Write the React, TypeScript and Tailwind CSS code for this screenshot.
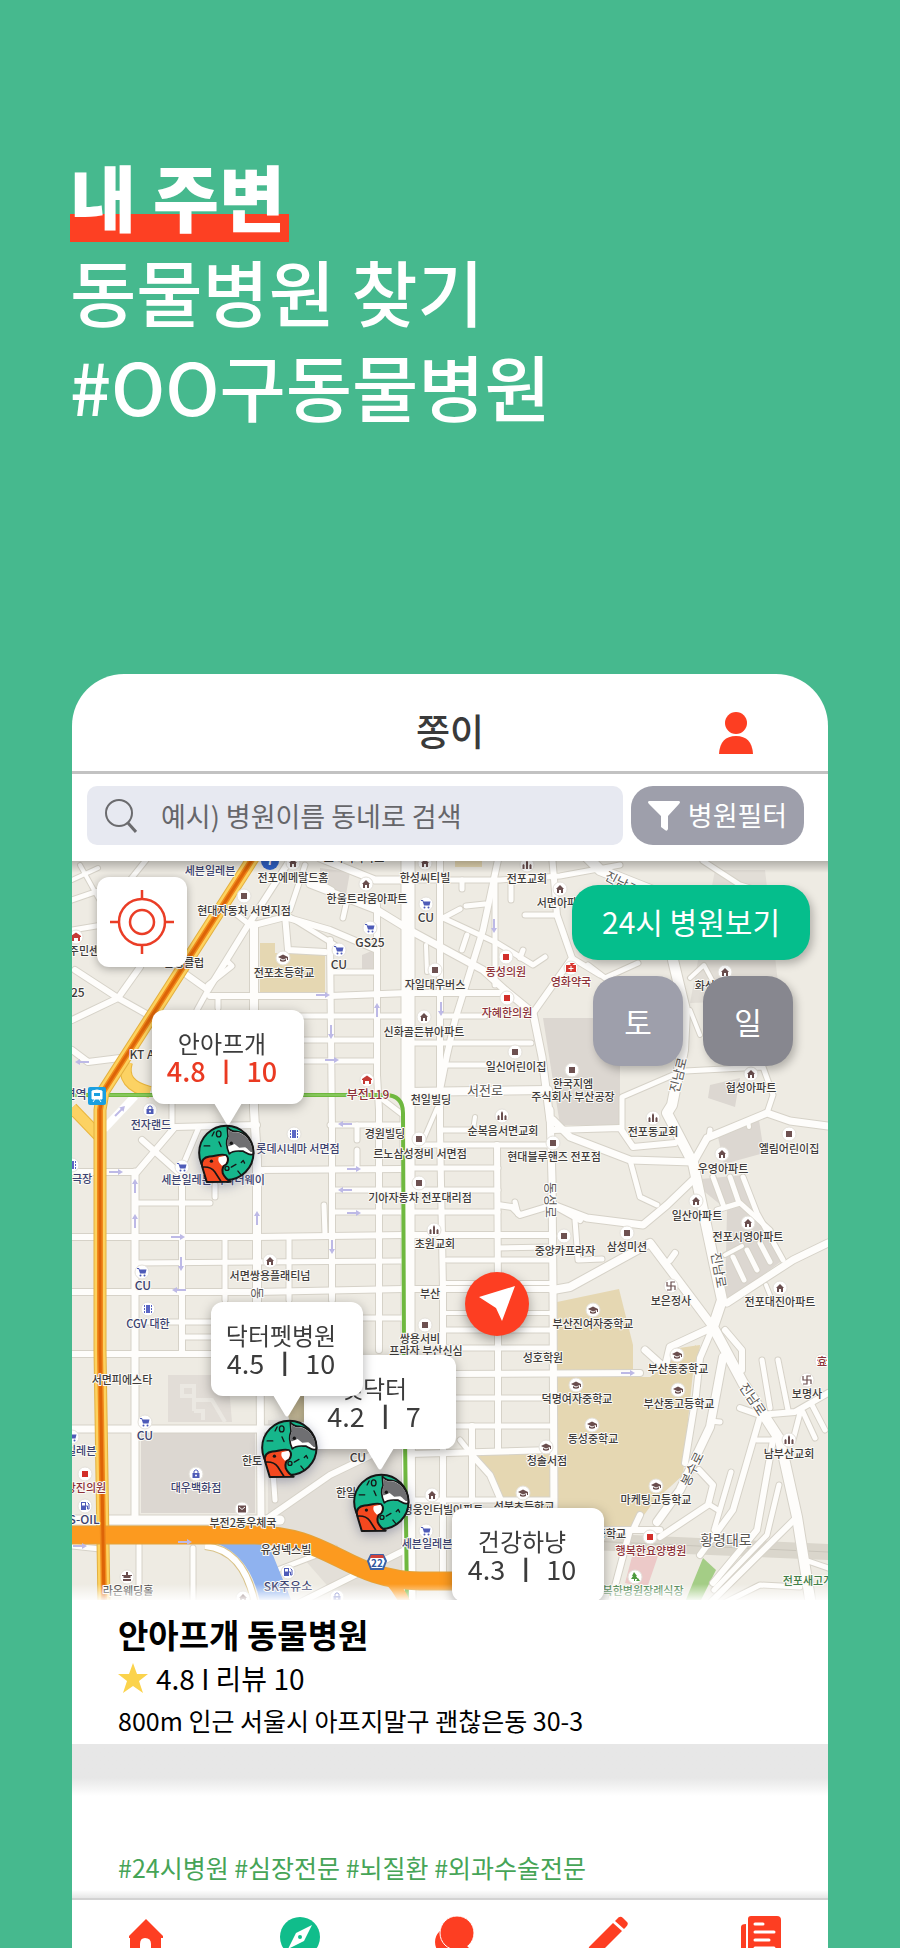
import React from "react";

type Kind =
  | "home" | "cart" | "square" | "red" | "church" | "school" | "bag" | "cinema"
  | "fuel" | "mail" | "temple" | "fire" | "cross" | "tree" | "hall";

type Tone = "dark" | "navy" | "wine" | "green";

const TONES: Record<Tone, string> = {
  dark: "#3f3c3b",
  navy: "#3c4270",
  wine: "#8c3038",
  green: "#3f7d45",
};

/* [text, centre x, centre y, tone, size] */
type Label = [string, number, number, Tone?, number?];

const LABELS: Label[] = [
  ["세븐일레븐", 210, 871, "navy"],
  ["전포에메랄드홈", 293, 878],
  ["스카이아파트", 354, 858],
  ["현대자동차 서면지점", 244, 911],
  ["전포초등학교", 284, 973],
  ["동주민센터", 84, 951],
  ["볼링클럽", 184, 963],
  ["GS25", 70, 993, "dark", 12],
  ["KT A", 142, 1055, "dark", 12],
  ["서면역", 70, 1095, "navy", 12],
  ["한울트라움아파트", 367, 899],
  ["한성씨티빌", 425, 878],
  ["전포교회", 527, 879],
  ["서면아파트", 562, 903],
  ["CU", 426, 918, "dark", 12],
  ["GS25", 370, 943, "dark", 12],
  ["CU", 339, 965, "dark", 12],
  ["자일대우버스", 435, 985],
  ["동성의원", 506, 972, "wine"],
  ["자혜한의원", 507, 1013, "wine"],
  ["영화약국", 571, 982, "wine"],
  ["신화골든뷰아파트", 424, 1032],
  ["일신어린이집", 516, 1067],
  ["부전119", 368, 1095, "wine", 12],
  ["천일빌딩", 431, 1100],
  ["한국지엠", 573, 1084],
  ["주식회사 부산공장", 573, 1097],
  ["화신아파트", 720, 986],
  ["협성아파트", 751, 1088],
  ["전자랜드", 151, 1125, "navy"],
  ["롯데시네마 서면점", 298, 1149, "navy"],
  ["극장", 82, 1179, "navy"],
  ["세븐일레븐 바이더웨이", 213, 1180, "navy"],
  ["서면쌍용플래티넘", 270, 1276],
  ["CU", 143, 1286, "navy", 12],
  ["CGV 대한", 148, 1324, "navy"],
  ["경원빌딩", 385, 1134],
  ["르노삼성정비 서면점", 420, 1154],
  ["순복음서면교회", 503, 1131],
  ["현대블루핸즈 전포점", 554, 1157],
  ["기아자동차 전포대리점", 420, 1198],
  ["초원교회", 435, 1244],
  ["중앙카프라자", 565, 1251],
  ["부산", 430, 1294],
  ["쌍용서비", 420, 1339],
  ["프라자 부산신심", 426, 1351],
  ["성호학원", 543, 1358],
  ["부산진여자중학교", 593, 1324],
  ["전포동교회", 653, 1132],
  ["엘림어린이집", 789, 1149],
  ["우영아파트", 723, 1169],
  ["일산아파트", 697, 1216],
  ["전포시영아파트", 748, 1237],
  ["삼성미션", 627, 1247],
  ["보은정사", 671, 1301],
  ["전포대진아파트", 780, 1302],
  ["서면피에스타", 122, 1380],
  ["CU", 145, 1436, "navy", 12],
  ["세븐일레븐", 71, 1451, "navy"],
  ["강진의원", 86, 1488, "wine"],
  ["S-OIL", 84, 1520, "navy", 12],
  ["대우백화점", 196, 1488, "navy"],
  ["부전2동우체국", 243, 1523],
  ["한토", 252, 1461],
  ["유성넥스빌", 286, 1550],
  ["SK주유소", 288, 1587, "navy", 12],
  ["라온웨딩홀", 128, 1591],
  ["CU", 358, 1458, "dark", 12],
  ["한일", 346, 1493],
  ["정웅인터빌아파트", 443, 1510],
  ["세븐일레븐", 427, 1544, "navy"],
  ["성북초등학교", 524, 1507],
  ["청솔서점", 547, 1461],
  ["덕명여자중학교", 577, 1399],
  ["동성중학교", 593, 1439],
  ["부산동중학교", 678, 1369],
  ["부산동고등학교", 679, 1404],
  ["마케팅고등학교", 656, 1500],
  ["보명사", 807, 1394],
  ["효", 822, 1362, "wine"],
  ["남부산교회", 789, 1454],
  ["행복한요양병원", 651, 1551, "wine"],
  ["중학교", 611, 1534],
  ["행복한병원장례식장", 638, 1591, "green"],
  ["전포새고개", 808, 1581, "green"],
];

/* [text, x, y, rotation, size] */
const ROAD_NAMES: [string, number, number, number, number][] = [
  ["서전로", 485, 1090, 0, 13],
  ["진남로", 622, 883, 28, 13],
  ["진남로", 678, 1075, -76, 13],
  ["동성로", 551, 1200, 90, 13],
  ["진남로", 719, 1270, 80, 13],
  ["진남로", 753, 1399, 56, 13],
  ["봉수로", 692, 1469, -64, 13],
  ["황령대로", 726, 1540, 0, 14],
  ["동", 258, 1293, 90, 13],
];

const POIS: [Kind, number, number][] = [
  ["home", 293, 863], ["square", 244, 896], ["school", 283, 958], ["fire", 76, 937],
  ["home", 366, 884], ["home", 425, 863], ["church", 527, 865], ["home", 560, 889],
  ["cart", 426, 904], ["cart", 370, 928], ["cart", 339, 950], ["square", 435, 970],
  ["red", 506, 957], ["red", 507, 998], ["cross", 571, 968], ["home", 424, 1017],
  ["square", 515, 1052], ["fire", 367, 1080], ["square", 572, 1070], ["home", 725, 972],
  ["home", 751, 1074], ["bag", 150, 1110], ["cinema", 294, 1134], ["cinema", 72, 1165],
  ["cart", 182, 1167], ["home", 270, 1261], ["cart", 142, 1272], ["cinema", 148, 1309],
  ["square", 419, 1139], ["church", 502, 1116], ["square", 553, 1143], ["square", 419, 1183],
  ["church", 434, 1230], ["square", 564, 1236], ["square", 425, 1325], ["school", 593, 1310],
  ["church", 653, 1118], ["square", 789, 1134], ["home", 722, 1154], ["home", 696, 1201],
  ["home", 748, 1223], ["square", 627, 1233], ["temple", 671, 1286], ["home", 780, 1288],
  ["cart", 145, 1422], ["cart", 72, 1437], ["red", 85, 1474], ["fuel", 85, 1506],
  ["bag", 196, 1474], ["mail", 242, 1509], ["fuel", 288, 1572], ["hall", 127, 1577],
  ["home", 432, 1495], ["cart", 426, 1531], ["school", 523, 1493], ["school", 546, 1447],
  ["school", 576, 1385], ["school", 592, 1425], ["school", 677, 1355], ["school", 678, 1390],
  ["school", 656, 1486], ["temple", 807, 1380], ["fire", 822, 1361], ["church", 789, 1440],
  ["red", 650, 1537], ["tree", 635, 1577], ["home", 243, 1598], ["bag", 337, 1597],
];

/* [points, width] */
const ROADS: [string, number][] = [
  ["254,925 254,1110 257,1160 257,1350", 8],
  ["408,855 408,1350 409,1605", 13],
  ["330,940 332,1130 332,1300", 6],
  ["377,905 377,1075 379,1110 379,1350", 6],
  ["440,855 440,1130 443,1290 443,1580", 6],
  ["495,880 495,985", 5],
  ["497,1145 498,1290 498,1450", 6],
  ["550,1110 552,1180 553,1290 554,1515", 7],
  ["499,855 483,930 455,1020 447,1055 440,1090", 6],
  ["320,858 375,880 408,880", 7],
  ["310,884 377,910 413,932 483,970 505,990 533,1013 542,1057 550,1120", 7],
  ["408,880 500,880 560,876 620,865", 5],
  ["443,918 497,943 533,965 545,957", 5],
  ["443,918 460,909", 5],
  ["466,906 485,904", 5],
  ["462,880 462,889", 5],
  ["511,880 511,900", 5],
  ["462,950 467,935", 5],
  ["520,958 523,950", 5],
  ["426,945 427,972", 4],
  ["533,1013 572,958 557,915 552,855", 6],
  ["525,915 556,915", 5],
  ["572,958 600,975", 5],
  ["210,996 330,996 408,993 507,993", 6],
  ["332,972 377,972", 5],
  ["254,1016 408,1016", 5],
  ["443,1016 485,1016", 5],
  ["254,1040 377,1040", 5],
  ["413,1043 531,1043", 5],
  ["254,1061 377,1061", 5],
  ["440,1065 543,1065", 5],
  ["408,1092 548,1090", 8],
  ["377,1095 403,1115 403,1150", 5],
  ["72,900 130,880 150,855", 5],
  ["72,930 120,922", 5],
  ["80,865 105,910", 4],
  ["72,880 98,868", 4],
  ["180,970 208,990 245,930 290,860", 6],
  ["72,1020 118,998 140,967", 6],
  ["75,970 118,998 150,1016", 6],
  ["208,990 197,1010", 5],
  ["208,985 232,966 228,962", 5],
  ["218,996 218,1008", 5],
  ["250,925 225,905", 5],
  ["254,925 285,917 330,930 377,950", 6],
  ["285,915 288,950 325,952", 6],
  ["290,910 305,865", 5],
  ["285,914 335,945", 5],
  ["305,875 332,890", 5],
  ["343,918 347,900", 5],
  ["72,1050 88,1062 120,1058", 6],
  ["72,1237 257,1237 403,1235 552,1235", 6],
  ["137,1263 403,1261", 5],
  ["447,1260 552,1260", 5],
  ["72,1292 257,1292 403,1289 552,1289", 6],
  ["137,1322 225,1322", 5],
  ["183,1337 225,1337", 5],
  ["72,1354 257,1354", 6],
  ["72,1172 135,1172", 6],
  ["135,1172 135,1515", 7],
  ["182,1175 182,1354", 6],
  ["225,1237 225,1300", 5],
  ["289,1237 289,1300", 5],
  ["325,1235 324,1205", 5],
  ["142,1140 178,1172", 6],
  ["137,1172 175,1127 257,1125", 6],
  ["199,1127 180,1172", 5],
  ["137,1203 210,1203", 5],
  ["215,1185 215,1197", 5],
  ["257,1170 403,1169", 6],
  ["172,1100 172,1125", 5],
  ["330,1125 403,1125", 5],
  ["357,1125 357,1140", 5],
  ["357,1150 357,1169", 5],
  ["332,1190 403,1190", 5],
  ["332,1212 403,1212", 5],
  ["332,1318 403,1318", 5],
  ["413,1145 552,1145", 5],
  ["440,1130 480,1130", 5],
  ["473,1130 475,1117", 4],
  ["422,1143 437,1108", 4],
  ["413,1168 498,1168", 5],
  ["413,1190 498,1190", 5],
  ["413,1212 498,1212", 5],
  ["498,1205 512,1207 520,1215 553,1205 580,1220", 6],
  ["518,1214 515,1202", 5],
  ["498,1248 550,1247", 5],
  ["443,1283 552,1283", 4],
  ["443,1313 552,1313", 4],
  ["443,1330 552,1330", 5],
  ["443,1348 552,1348", 5],
  ["443,1374 640,1373", 6],
  ["443,1398 552,1398", 5],
  ["443,1426 552,1426", 5],
  ["409,1454 552,1450", 6],
  ["472,1426 472,1500", 6],
  ["472,1455 490,1475 505,1510", 6],
  ["460,1440 468,1450", 5],
  ["409,1500 552,1500", 5],
  ["72,1429 332,1429", 7],
  ["72,1520 280,1520", 9],
  ["260,1354 261,1520", 7],
  ["268,1518 330,1475 409,1437", 6],
  ["270,1429 275,1500", 5],
  ["139,1545 139,1600", 5],
  ["193,1548 193,1600", 5],
  ["280,1569 335,1548", 5],
  ["295,1605 409,1548", 6],
  ["72,1546 100,1549", 5],
  ["585,855 600,870 663,895 673,960 685,1010 683,1050 672,1105 667,1113 693,1163 722,1300 713,1327 743,1383 780,1440 797,1517 811,1605", 10],
  ["703,861 740,885 790,900", 5],
  ["553,1120 570,1137 630,1160 693,1162", 7],
  ["630,1160 640,1197 657,1205", 5],
  ["553,1205 587,1218 643,1225 667,1205 693,1180", 7],
  ["575,1220 578,1260 602,1259", 5],
  ["693,1163 707,1138 767,1113 790,1121 828,1126", 7],
  ["709,1138 710,1130", 5],
  ["748,1120 749,1127", 4],
  ["767,1113 773,1095 763,1067 685,1071", 5],
  ["622,1128 622,1097 680,1072", 5],
  ["553,1130 620,1128 633,1147 675,1143", 6],
  ["673,1010 690,1010 700,1035", 4],
  ["588,965 605,978 638,963", 5],
  ["690,978 704,965 720,995", 4],
  ["553,1290 570,1287 650,1243 713,1327", 8],
  ["670,1260 675,1253", 6],
  ["645,1350 665,1368 670,1347 713,1327", 7],
  ["713,1327 700,1358 696,1395 685,1463", 6],
  ["727,1303 793,1260 828,1243", 7],
  ["743,1177 757,1213 783,1260", 5],
  ["717,1210 740,1203 770,1230", 5],
  ["713,1177 724,1207", 5],
  ["730,1177 739,1203", 5],
  ["733,1257 744,1280", 5],
  ["747,1250 757,1270", 5],
  ["760,1243 770,1262", 5],
  ["725,1255 742,1246", 4],
  ["766,1285 770,1295", 4],
  ["725,1330 742,1350 742,1370", 6],
  ["723,1357 710,1427 680,1490 657,1522", 8],
  ["710,1421 720,1422", 5],
  ["699,1470 713,1485 708,1505 660,1537", 6],
  ["760,1417 733,1510 700,1555", 6],
  ["757,1440 780,1440", 5],
  ["773,1440 757,1530 713,1583", 6],
  ["779,1485 767,1535 714,1590", 5],
  ["797,1517 708,1605", 6],
  ["740,1408 760,1415 795,1412 828,1393", 6],
  ["762,1360 770,1408", 5],
  ["778,1360 788,1410", 5],
  ["803,1412 815,1438", 5],
  ["812,1405 825,1430", 5],
  ["800,1413 793,1440", 5],
  ["731,1472 714,1530", 5],
  ["710,1505 718,1510", 5],
  ["600,1530 660,1530", 6],
  ["630,1530 610,1605", 6],
  ["805,1560 828,1568", 5],
  ["720,1605 760,1585 800,1587", 5],
  ["640,1515 633,1530", 6],
];

/* [x, y, rotation] */
const ARROWS: [number, number, number][] = [
  [323, 995, 0], [377, 1010, -90], [331, 1032, 90], [332, 1060, 0], [494, 926, 90],
  [441, 1009, 90], [120, 1111, -45], [116, 1172, 0], [135, 1186, -90], [135, 1221, -90],
  [257, 1218, -90], [178, 1237, 0], [181, 1264, 90], [179, 1290, 180], [345, 1124, 180],
  [354, 1169, 0], [345, 1190, 180], [354, 1213, 0], [332, 1247, 90], [628, 1373, 0],
  [185, 1542, 0], [80, 1546, 0], [82, 1062, 180],
];

function PoiGlyph({ kind }: { kind: Kind }) {
  switch (kind) {
    case "home":
      return <path d="M-4 0 0-4 4 0H3V4H1V1H-1V4H-3V0Z" fill="#6a4e4e" />;
    case "cart":
      return (
        <g fill="#4e5bb8">
          <path d="M-5-4h2l.6 1.5H4.500L3.500 1.500H-2L-3.500-3H-5Z" />
          <circle cx="-1.500" cy="3.500" r="1" />
          <circle cx="2.500" cy="3.500" r="1" />
        </g>
      );
    case "square":
      return <rect x="-3" y="-3" width="6" height="6" fill="#6e5151" />;
    case "red":
      return <rect x="-3" y="-3" width="6" height="6" fill="#d22f2a" />;
    case "church":
      return <path d="M-1 4V-3L0-5 1-3V4ZM-4.500 4V0L-3.500-1-2.500 0V4ZM2.500 4V0L3.500-1 4.500 0V4Z" fill="#6a4e4e" />;
    case "school":
      return <path d="M-5-1 0-3.500 5-1V2H4V0L0 1.500ZM-3 1 0 2.500 3 1V3Q0 4.500-3 3Z" fill="#6a4e4e" />;
    case "bag":
      return (
        <g>
          <path d="M-3.500-1H3.500V4H-3.500Z" fill="#4e5bb8" />
          <path d="M-2-1V-3Q0-5.500 2-3V-1" fill="none" stroke="#4e5bb8" />
          <circle cy="1.500" r="1" fill="#fff" />
        </g>
      );
    case "cinema":
      return (
        <g fill="#5a66c4">
          <rect x="-2" y="-4" width="4" height="8" />
          <path d="M-4-4h1v2h-1ZM-4-1h1v2h-1ZM-4 2h1v2h-1ZM3-4h1v2H3ZM3-1h1v2H3ZM3 2h1v2H3Z" />
        </g>
      );
    case "fuel":
      return (
        <g>
          <path d="M-4-4H1V4H-4Z" fill="#4e5bb8" />
          <rect x="-3" y="-3" width="3" height="2.500" fill="#fff" />
          <path d="M1 0H2.500V3H4V-2L2.500-3.500" fill="none" stroke="#4e5bb8" />
        </g>
      );
    case "mail":
      return (
        <g>
          <rect x="-4" y="-3.500" width="8" height="7" fill="#6a4e4e" />
          <path d="M-3-2 0 .5 3-2" fill="none" stroke="#fff" />
        </g>
      );
    case "temple":
      return <path d="M-4-4V0H4V4M4-4H0V4H-4" fill="none" stroke="#6a4e4e" strokeWidth="1.200" />;
    case "fire":
      return <path d="M-5-1 0-4.500 5-1V0H4V4H2V1H-2V4H-4V0H-5Z" fill="#c53a35" />;
    case "cross":
      return (
        <g>
          <path d="M-5-3H5V4H-5ZM-1-5H4L0-2Z" fill="#d9362f" />
          <path d="M0-2V3M-2.500.5H2.500" stroke="#fff" />
        </g>
      );
    case "tree":
      return <path d="M-1-5 2-1H1L3 2H0V4H-1V2H-4L-2-1H-3ZM3 1 5 4H1Z" fill="#4e9b3f" />;
    case "hall":
      return <path d="M-4 4V2H4V4ZM-3.500 1V-2H3.500V1ZM-1-2V-5H1V-2ZM-5-2H5V-1H-5Z" fill="#6a4e4e" />;
  }
}

function MapCanvas() {
  return (
    <svg
      className="block h-full w-full"
      viewBox="72 861 756 739"
      preserveAspectRatio="xMidYMid slice"
      fontFamily="'Noto Sans CJK KR', 'Noto Sans', sans-serif"
    >
      <rect x="0" y="800" width="1000" height="900" fill="#eeebe3" />
      <g fill="#dcd7d1">
        <path d="M543 1018H620V1125H560Z" />
        <path d="M141 1433H255V1513H141Z" />
        <path d="M168 1375H228L232 1422H168Z" fill="#e2ddd7" />
        <path d="M718 1137 759 1120 764 1153 724 1164Z" />
        <path d="M690 1180 745 1175 757 1213 783 1260 725 1303 727 1210Z" />
        <path d="M715 870H765L780 1000 690 1003Z" fill="#e2ded7" />
        <path d="M710 1085 740 1078 735 1107 708 1098Z" />
        <path d="M268 1420H409V1600H340L268 1518Z" fill="#e3dfd8" />
        <path d="M320 868 350 872 345 900 320 890Z" />
        <path d="M362 972V955L374 950V972Z" />
      </g>
      <g fill="#e5d7b2">
        <path d="M260 943H275V953L325 955V993H260Z" />
        <path d="M557 1302 619 1289 633 1345V1373H557Z" />
        <path d="M557 1377H650L696 1345 690 1400 683 1475 670 1487 655 1500 633 1530H557Z" />
        <path d="M477 1454H552V1512H505L495 1480Z" />
        <path d="M455 861H482V867H455Z" />
        <path d="M282 1395H304V1422H290Z" fill="#c9bd99" />
        <path d="M665 1350 700 1345 698 1368 665 1368Z" />
      </g>
      <g fill="none" stroke="#ebe8e2" strokeWidth="4">
        <path d="M182 1386H194V1396H182ZM194 1386V1411M194 1400H212L225 1422M194 1411H203V1420" />
      </g>
      <path d="M590 1533 828 1544V1560L590 1550Z" fill="#dad6cc" />
      <path d="M590 1541 828 1552" stroke="#c9c5bb" />
      <path d="M633 1553H659L647 1588 625 1583Z" fill="#ecc9c8" />
      <path d="M703 1558 716 1570 700 1602H685Z" fill="#a4cd86" />

      <g fill="none" strokeLinecap="round" strokeLinejoin="round">
        {ROADS.map(([points, width], i) => (
          <polyline key={i} points={points} stroke="#d6d2c8" strokeWidth={width + 2} />
        ))}
        {ROADS.map(([points, width], i) => (
          <polyline key={i} points={points} stroke="#fefdfb" strokeWidth={width} />
        ))}
      </g>

      <path d="M215 1543H268L292 1602H260Q250 1555 215 1543Z" fill="#8fb2ef" />
      <g fill="none">
        <path d="M205 1546Q245 1550 255 1605" stroke="#d9c38a" strokeWidth="8" />
        <path d="M205 1546Q245 1550 255 1605" stroke="#fff" strokeWidth="6" />
        <path d="M127 1062Q120 1085 150 1092" stroke="#e9b53c" strokeWidth="12" />
        <path d="M127 1062Q120 1085 150 1092" stroke="#fcd263" strokeWidth="10" />
        <path d="M72 1108 98 1135" stroke="#e9b53c" strokeWidth="12" />
        <path d="M72 1108 98 1135" stroke="#fcd263" strokeWidth="10" />
        <path d="M104 1129 135 1096" stroke="#fff" strokeWidth="8" />
        <path d="M72 1095H385Q403 1095 403 1113L404 1350 407 1605" stroke="#6fb83f" strokeWidth="4" />
        <path d="M72 1095H385" stroke="#86c75b" strokeWidth="2" />
        <path d="M255 855 103 1092 100 1110V1350L104 1605" stroke="#e3b040" strokeWidth="13" />
        <path d="M255 855 103 1092 100 1110V1350L104 1605" stroke="#fdd25f" strokeWidth="11" />
        <path d="M72 1535H250C330 1533 345 1580 420 1581H460" stroke="#e3a23a" strokeWidth="19" />
        <path d="M370 1562Q395 1580 406 1605" stroke="#fb9b20" strokeWidth="11" />
        <path d="M72 1535H250C330 1533 345 1580 420 1581H460" stroke="#fc9a1f" strokeWidth="17" />
        <path d="M255 855 103 1092 100 1110V1350L104 1605" stroke="#f08a1c" strokeWidth="6" />
        <path d="M255 855 103 1092 100 1110V1350L104 1605" stroke="#dd6408" strokeWidth="3" />
      </g>

      {ARROWS.map(([x, y, r], i) => (
        <g key={i} transform={`translate(${x} ${y}) rotate(${r})`}>
          <path d="M-7 0H3" stroke="#bdb9e6" strokeWidth="2" />
          <path d="M2-3 7 0 2 3Z" fill="#bdb9e6" />
        </g>
      ))}

      {ROAD_NAMES.map(([text, x, y, r, size], i) => (
        <text
          key={i}
          transform={`translate(${x} ${y}) rotate(${r})`}
          dy="5"
          textAnchor="middle"
          fontSize={size}
          fill="#5b5854"
          stroke="#fff"
          strokeWidth="2"
          paintOrder="stroke"
        >
          {text}
        </text>
      ))}

      {POIS.map(([kind, x, y], i) => (
        <g key={i} transform={`translate(${x} ${y})`}>
          <circle r="7" fill="#fff" stroke="#e4e1da" />
          <PoiGlyph kind={kind} />
        </g>
      ))}

      {LABELS.map(([text, x, y, tone = "dark", size = 11], i) => (
        <text
          key={i}
          x={x}
          y={y + 4}
          textAnchor="middle"
          fontSize={size}
          fontWeight="500"
          fill={TONES[tone]}
          stroke="#fbfaf6"
          strokeWidth="2"
          strokeLinejoin="round"
          paintOrder="stroke"
        >
          {text}
        </text>
      ))}

      <circle cx="270" cy="861" r="9" fill="#2f62c9" />
      <text x="270" y="865" textAnchor="middle" fontSize="12" fontWeight="700" fill="#fff">7</text>
      <g transform="translate(97 1096)">
        <rect x="-9" y="-9" width="18" height="18" rx="2" fill="#1a9fe0" />
        <path d="M-5-5Q0-7 5-5V3H-5ZM-4 6-2 3M4 6 2 3" fill="#fff" stroke="#fff" />
        <path d="M-3-3H3V0H-3Z" fill="#1a9fe0" />
      </g>
      <g transform="translate(377 1562)">
        <path d="M-6-7H6L9-1 6 7H-6L-9-1Z" fill="#fff" stroke="#3c63a8" strokeWidth="2" />
        <path d="M-6-7H6L7-4H-7Z" fill="#d0433c" />
        <text y="5" textAnchor="middle" fontSize="10" fontWeight="700" fill="#2f58a0">22</text>
      </g>
    </svg>
  );
}

function PetMarker({ className }: { className: string }) {
  return (
    <svg
      viewBox="375 65 174 184"
      className={`absolute h-[61px] w-[58px] drop-shadow-[0_3px_6px_rgba(30,40,90,0.35)] ${className}`}
      strokeLinejoin="round"
      strokeLinecap="round"
    >
      <circle cx="463" cy="155" r="82" fill="#16b78c" />
      <path
        d="M466 78 468 106C460 122 464 140 472 158 484 146 498 150 514 150 526 156 534 166 545 158 546 122 520 92 492 90 480 92 474 86 466 78Z"
        fill="#fff"
        stroke="#161616"
        strokeWidth="5"
      />
      <path
        d="M469 82 471 106C464 120 464 128 470 136L488 128 502 140 520 138C532 146 538 158 542 150 542 122 518 95 492 93 480 94 474 90 469 82Z"
        fill="#6f6f72"
      />
      <circle cx="463" cy="155" r="82" fill="none" stroke="#161616" strokeWidth="6" />
      <path
        d="M390 196C386 178 396 168 412 166 430 166 446 156 462 162 472 170 468 184 462 190 452 194 450 204 452 216 458 230 466 236 476 242L404 243Z"
        fill="#f4481f"
        stroke="#161616"
        strokeWidth="6"
      />
      <path d="M440 168 460 164C468 172 464 182 460 188L450 194C444 186 436 182 440 168Z" fill="#fff" />
      <path d="M392 198Q416 196 428 212L446 240" fill="none" stroke="#161616" strokeWidth="5" />
      <circle cx="478" cy="126" r="5" fill="#161616" />
      <circle cx="418" cy="180" r="5" fill="#161616" />
      <g fill="none" stroke="#161616" strokeWidth="4">
        <ellipse cx="440" cy="98" rx="7" ry="9" />
        <circle cx="465" cy="202" r="6" />
        <path d="M396 134H413M441 122 447 136M478 198 492 190M508 184 514 178 518 186M498 210 506 220M420 104 426 92" />
      </g>
    </svg>
  );
}

function Callout({
  name,
  score,
  count,
  active = false,
  className,
}: {
  name: string;
  score: string;
  count: string;
  active?: boolean;
  className: string;
}) {
  return (
    <button
      type="button"
      className={`absolute flex h-[94px] w-[152px] flex-col items-center justify-center rounded-xl bg-white pr-3 text-2xl leading-7 text-[#3c3c3c] drop-shadow-[0_3px_6px_rgba(0,0,0,0.3)] ${className}`}
    >
      <span>{name}</span>
      <span
        className={`flex gap-2 text-[27px] leading-7 ${active ? "font-medium text-[#ea3a22]" : ""}`}
      >
        <span>{score}</span>
        <span className="font-medium">ㅣ</span>
        <span>{count}</span>
      </span>
      <svg viewBox="0 0 28 22" className="absolute top-full left-[62px] -mt-px h-[22px] w-7">
        <path d="M0 0H28L16 20Q14 23 12 20Z" fill="#fff" />
      </svg>
    </button>
  );
}

function MapSection() {
  return (
    <section aria-label="지도" className="relative h-[739px] overflow-hidden bg-[#eeebe3]">
      <MapCanvas />
      <div className="absolute inset-x-0 top-0 h-3 bg-linear-to-b from-black/25 to-transparent" />
      <div className="absolute inset-x-0 bottom-0 h-4 bg-linear-to-b from-white/0 to-white/90" />

      <PetMarker className="top-[262px] left-[125px]" />
      <Callout name="안아프개" score="4.8" count="10" active className="top-[149px] left-20" />
      <PetMarker className="top-[611px] left-[280px]" />
      <Callout name="펫닥터" score="4.2" count="7" className="top-[494px] left-[232px]" />
      <PetMarker className="top-[557px] left-[188px]" />
      <Callout name="닥터펫병원" score="4.5" count="10" className="top-[441px] left-[139px]" />
      <Callout name="건강하냥" score="4.3" count="10" className="top-[647px] left-[380px]" />

      <span className="absolute top-[411px] left-[393px] flex size-16 items-center justify-center rounded-full bg-[#fd3e22] shadow-[0_4px_12px_rgba(0,0,0,0.35)]">
        <svg viewBox="0 0 36 36" className="size-9">
          <path d="M0 11 36 0 23 35 17 22Z" fill="#fff" />
        </svg>
      </span>

      <button
        type="button"
        aria-label="현재 위치"
        className="absolute top-4 left-[25px] flex size-[90px] items-center justify-center rounded-xl bg-white shadow-[0_2px_8px_rgba(0,0,0,0.3)]"
      >
        <svg viewBox="0 0 64 64" className="size-16" fill="none" stroke="#ea3d26" strokeWidth="2.500">
          <circle cx="32" cy="32" r="23" />
          <circle cx="32" cy="32" r="12" />
          <path d="M32 0V9M32 55V64M0 32H9M55 32H64" />
        </svg>
      </button>

      <div className="absolute top-6 right-[18px] flex w-[238px] flex-col gap-4 text-3xl text-white">
        <button
          type="button"
          className="h-[75px] rounded-[26px] bg-[#05be8c] pb-1 shadow-[3px_4px_8px_rgba(0,0,0,0.25)]"
        >
          24시 병원보기
        </button>
        <div className="flex gap-5 pl-[21px]">
          <button
            type="button"
            className="size-[90px] rounded-[26px] bg-[#9e9fab] shadow-[3px_4px_8px_rgba(0,0,0,0.25)]"
          >
            토
          </button>
          <button
            type="button"
            className="size-[90px] rounded-[26px] bg-[#87878f] shadow-[3px_4px_8px_rgba(0,0,0,0.25)]"
          >
            일
          </button>
        </div>
      </div>
    </section>
  );
}

function BottomNav() {
  return (
    <nav className="relative flex h-[50px] items-start justify-between overflow-hidden border-t-2 border-[#d2d2d2] bg-white pt-4 pr-[45px] pl-[53px]">
      <a href="#home" aria-label="홈">
        <svg viewBox="0 0 42 42" className="size-[42px]">
          <path d="M21 3 38 20V22H36V42H26V28Q26 22 20 22 15 22 15 28V42H5V22H4V20Z" fill="#fd3e22" />
        </svg>
      </a>
      <a href="#near" aria-label="주변">
        <svg viewBox="0 0 42 42" className="size-[42px]">
          <circle cx="21" cy="21" r="20" fill="#10bd8b" />
          <path d="M33 9 25 25 9 33 17 17Z" fill="#fff" />
          <circle cx="21" cy="21" r="2" fill="#10bd8b" />
        </svg>
      </a>
      <a href="#talk" aria-label="대화">
        <svg viewBox="0 0 42 42" className="size-[42px]">
          <circle cx="17" cy="26" r="15" fill="#fd3e22" />
          <circle cx="24" cy="17" r="17" fill="#fd3e22" stroke="#fff" strokeWidth="1" />
          <path d="M30 26 40 36 24 34Z" fill="#fd3e22" />
        </svg>
      </a>
      <a href="#write" aria-label="글쓰기">
        <svg viewBox="0 0 42 42" className="size-[42px]" fill="#fd3e22">
          <path d="M30 3Q33-1 36 2L40 6Q42 8 39 11L37 13 28 5Z" />
          <path d="M26 7 35 15 10 40 0 42 2 31Z" />
        </svg>
      </a>
      <a href="#news" aria-label="소식">
        <svg viewBox="0 0 42 42" className="size-[42px]">
          <path d="M5 8V42H0V11Q0 8 5 8Z" fill="#fd3e22" />
          <path d="M7 3Q7 0 10 0H36Q40 0 40 4V42H7Z" fill="#fd3e22" />
          <path d="M14 8H22M14 16H33M14 24H28M14 32H33" stroke="#fff" strokeWidth="3" strokeLinecap="round" />
        </svg>
      </a>
    </nav>
  );
}

export default function App() {
  return (
    <main className="min-h-screen bg-[#46b98e] px-[72px] pt-[147px] font-['Noto_Sans_CJK_KR','Noto_Sans',sans-serif]">
      <h1 className="-ml-[2px] text-[72px] leading-[95px] font-medium text-white">
        <span className="inline-block bg-linear-to-b from-transparent from-[67px] to-[#fd4023] to-[67px] pr-1 font-black">
          내 주변
        </span>
        <br />
        동물병원 찾기
        <br />
        #OO구동물병원
      </h1>

      <div className="mt-[242px] overflow-hidden rounded-t-[52px] bg-white">
        <header className="relative flex h-[100px] items-center justify-center border-b-[3px] border-[#c2c2c2] pt-4">
          <h2 className="text-[37px] leading-none font-medium text-[#3a3a3a]">쫑이</h2>
          <button type="button" aria-label="내 정보" className="absolute right-[75px] bottom-4">
            <svg viewBox="0 0 34 43" className="h-[43px] w-[34px]" fill="#fd3e22">
              <circle cx="17" cy="11" r="11" />
              <path d="M0 42Q1 24 17 24 33 24 34 42Z" />
            </svg>
          </button>
        </header>

        <form
          className="flex gap-2 pt-3 pr-6 pb-4 pl-[15px]"
          onSubmit={(e: React.FormEvent) => e.preventDefault()}
        >
          <label className="flex h-[59px] min-w-0 flex-1 items-center gap-6 rounded-[10px] bg-[#e7e9f1] pl-[18px]">
            <svg viewBox="0 0 32 34" className="h-[34px] w-8 shrink-0" fill="none" stroke="#6b6b6e" strokeWidth="2">
              <circle cx="14" cy="14" r="13" />
              <path d="M23 24 31 33" strokeWidth="3" />
            </svg>
            <span className="sr-only">병원 검색</span>
            <input
              type="search"
              placeholder="예시) 병원이름 동네로 검색"
              className="h-full min-w-0 flex-1 bg-transparent text-[27px] text-[#5c5c60] outline-none placeholder:text-[#66666a]"
            />
          </label>
          <button
            type="submit"
            className="flex h-[59px] w-[173px] items-center justify-center gap-2 rounded-[22px] bg-[#9e9fab] text-[27px] text-white"
          >
            <svg viewBox="0 0 32 30" className="h-[30px] w-8" fill="#fff">
              <path d="M1 0H31Q33 1 31 3L20 15V28Q19 31 17 29L13 26V15L1 3Q-1 1 1 0Z" />
            </svg>
            병원필터
          </button>
        </form>

        <MapSection />

        <section className="px-[46px] pt-2 pb-1 text-black">
          <h3 className="text-[33px] leading-[52px] font-bold">안아프개 동물병원</h3>
          <p className="flex h-9 items-center gap-2 text-[28px] leading-9">
            <svg viewBox="0 0 30 30" className="size-[30px]" fill="#fbd34c">
              <path d="M15 0 19 11H30L21 18 25 30 15 23 5 30 9 18 0 11H11Z" />
            </svg>
            4.8 I 리뷰 10
          </p>
          <p className="mt-1 text-[25px] leading-10">
            800m 인근 서울시 아프지말구 괜찮은동 30-3
          </p>
        </section>

        <div className="h-[52px] bg-linear-to-b from-[#e7e7e7] from-65% to-white" />

        <p className="bg-linear-to-t from-black/10 to-transparent to-[8px] px-[46px] pt-[52px] pb-3 text-[25px] leading-[38px] text-[#46a457]">
          #24시병원 #심장전문 #뇌질환 #외과수술전문
        </p>

        <BottomNav />
      </div>
    </main>
  );
}
